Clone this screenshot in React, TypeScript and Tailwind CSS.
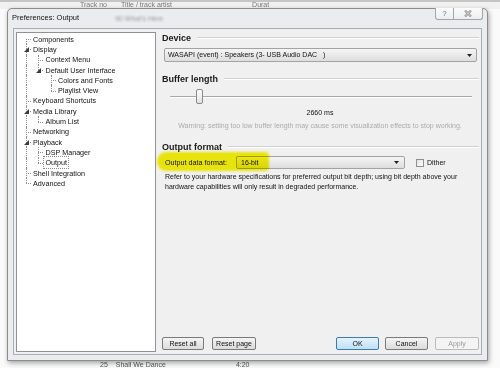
import React from "react";

type Cell = "F" | "T" | "L" | "I" | " ";

const rows: { label: string; cells: Cell[]; exp?: boolean; sel?: boolean }[] = [
  { label: "Components", cells: ["F"] },
  { label: "Display", cells: ["T"], exp: true },
  { label: "Context Menu", cells: ["I", "T"] },
  { label: "Default User Interface", cells: ["I", "L"], exp: true },
  { label: "Colors and Fonts", cells: ["I", " ", "T"] },
  { label: "Playlist View", cells: ["I", " ", "L"] },
  { label: "Keyboard Shortcuts", cells: ["T"] },
  { label: "Media Library", cells: ["T"], exp: true },
  { label: "Album List", cells: ["I", "L"] },
  { label: "Networking", cells: ["T"] },
  { label: "Playback", cells: ["T"], exp: true },
  { label: "DSP Manager", cells: ["I", "T"] },
  { label: "Output", cells: ["I", "L"], sel: true },
  { label: "Shell Integration", cells: ["T"] },
  { label: "Advanced", cells: ["L"] },
];

function Guide({ c, first, exp }: { c: Cell; first: boolean; exp: boolean }) {
  return (
    <div className={first ? "relative h-full w-[15px] shrink-0" : "relative h-full w-[12.5px] shrink-0"}>
      {c !== " " && (
        <div
          className={
            (first ? "left-[9px] " : "left-[6px] ") +
            (c === "F"
              ? "absolute top-1/2 bottom-0 border-l border-dotted border-[#8f8f8f]"
              : c === "L"
              ? "absolute top-0 h-1/2 border-l border-dotted border-[#8f8f8f]"
              : "absolute top-0 bottom-0 border-l border-dotted border-[#8f8f8f]")
          }
        />
      )}
      {(c === "F" || c === "T" || c === "L") && (
        <div
          className={
            (first ? "left-[9px] " : "left-[6px] ") +
            "absolute top-1/2 w-[5px] border-t border-dotted border-[#8f8f8f]"
          }
        />
      )}
      {exp && (
        <svg
          className={(first ? "left-[7px] " : "left-[4px] ") + "absolute top-[3px]"}
          width="5"
          height="5"
          viewBox="0 0 5 5"
        >
          <polygon points="5,0 5,5 0,5" fill="#3a3a3a" />
        </svg>
      )}
    </div>
  );
}

function Heading({ text }: { text: string }) {
  return (
    <div className="flex h-[12px] items-center pl-[2px] pr-[1px]">
      <span className="whitespace-nowrap text-[9px] font-bold leading-[12px] text-[#1a1a1a]">{text}</span>
      <div className="ml-[6px] h-[2px] flex-1 border-t border-b border-t-[#d0d0d0] border-b-white" />
    </div>
  );
}

function Arrow() {
  return (
    <svg width="5" height="3" viewBox="0 0 5 3" className="shrink-0">
      <polygon points="0,0 5,0 2.5,3" fill="#202020" />
    </svg>
  );
}

function Btn({ label, w, kind }: { label: string; w: string; kind?: "ok" | "dis" }) {
  const base = "flex h-[13px] items-center justify-center rounded-[2px] border text-[7px] leading-[10px] ";
  const cls =
    kind === "ok"
      ? "border-[#3d7bad] bg-gradient-to-b from-[#e5f3fc] to-[#bfe0f6] text-[#111]"
      : kind === "dis"
      ? "border-[#b8bcbf] bg-[#f4f4f4] text-[#9a9a9a]"
      : "border-[#7a7a7a] bg-gradient-to-b from-[#f4f4f4] to-[#dcdcdc] text-[#111]";
  return <div className={base + cls + " " + w}>{label}</div>;
}

export default function App() {
  return (
    <div className="relative h-[368px] w-[500px] overflow-hidden bg-[#fafafa] font-['Liberation_Sans',Arial,sans-serif]">
      {/* background window */}
      <div className="flex h-full flex-col">
        <div className="h-[2px] bg-[#c4c4c4]" />
        <div className="flex h-[7px] items-start overflow-hidden bg-[#f1f1f1] text-[7px] leading-[5px] text-[#7a7a7a] blur-[0.5px]">
          <span className="ml-[80px]">Track no</span>
          <span className="ml-[14px]">Title / track artist</span>
          <span className="ml-[80px]">Durat</span>
        </div>
        <div className="flex-1" />
        <div className="flex h-[9px] items-end text-[7px] leading-[7px] text-[#555] blur-[0.5px]">
          <span className="ml-[100px]">25</span>
          <span className="ml-[8px]">Shall We Dance</span>
          <span className="ml-[70px]">4:20</span>
        </div>
      </div>

      {/* dialog window */}
      <div className="absolute left-[7px] top-[8px] flex h-[353px] w-[481px] flex-col rounded-t-[5px] border border-[#8c8c8c] bg-[#eaecef] shadow-[1px_2px_5px_rgba(0,0,0,0.35)]">
        {/* title bar */}
        <div className="flex h-[19px] items-start">
          <span className="ml-[4px] mt-[4px] whitespace-nowrap text-[7.5px] leading-[10px] text-[#111]">
            Preferences: Output
          </span>
          <span className="ml-[36px] mt-[6px] whitespace-nowrap text-[7px] leading-[8px] text-[#9a9a9a] blur-[1px]">
            90 What's Here
          </span>
          <div className="flex-1" />
          <div className="-mt-[1px] mr-[4px] flex h-[12px] overflow-hidden rounded-b-[3px] border border-t-0 border-[#a0a6ac] bg-gradient-to-b from-[#fbfbfb] to-[#eceef0]">
            <div className="flex w-[18px] items-center justify-center border-r border-[#a0a6ac] text-[8px] leading-[8px] text-[#707070]">
              ?
            </div>
            <div className="flex w-[28px] items-center justify-center">
              <svg width="8" height="7" viewBox="0 0 8 7">
                <path d="M1 0.5 L7 6.5 M7 0.5 L1 6.5" stroke="#8a8a8a" strokeWidth="2.2" />
                <path d="M1 0.5 L7 6.5 M7 0.5 L1 6.5" stroke="#f4f4f4" strokeWidth="0.8" />
              </svg>
            </div>
          </div>
        </div>

        {/* client area */}
        <div className="mx-[5px] mb-[5px] flex flex-1 border border-[#a9adb2] bg-[#f0f0f0] pb-[2px] pl-[2px] pr-[1px] pt-[3px]">
          {/* tree */}
          <div className="w-[140px] shrink-0 border border-[#8e9298] bg-white pt-[1px]">
            {rows.map((r) => (
              <div key={r.label} className="flex h-[10.3px] items-center">
                {r.cells.map((c, i) => (
                  <Guide key={i} c={c} first={i === 0} exp={!!r.exp && i === r.cells.length - 1} />
                ))}
                <span
                  className={
                    r.sel
                      ? "whitespace-nowrap pl-[1px] text-[7.2px] leading-[9px] text-[#111] outline-1 outline-dotted outline-[#8a8a8a] outline-offset-[1px]"
                      : "whitespace-nowrap pl-[1px] text-[7.2px] leading-[9px] text-[#111]"
                  }
                >
                  {r.label}
                </span>
              </div>
            ))}
          </div>

          {/* right panel */}
          <div className="ml-[4px] flex flex-1 flex-col">
            <Heading text="Device" />
            <div className="ml-[4px] mr-[3px] mt-[4px] flex h-[14px] items-center rounded-[2px] border border-[#a3a3a3] bg-gradient-to-b from-[#f5f5f5] to-[#dedede] pl-[3px] pr-[4px]">
              <span className="flex-1 whitespace-pre text-[7px] leading-[10px] text-[#111]">
                WASAPI (event) : Speakers (3- USB Audio DAC   )
              </span>
              <Arrow />
            </div>

            <div className="mt-[11px]">
              <Heading text="Buffer length" />
            </div>
            <div className="relative mt-[4px] flex h-[15px] items-center pl-[10px] pr-[8px]">
              <div className="h-[2px] flex-1 border-t border-b border-t-[#a8a8a8] border-b-white bg-[#d8d8d8]" />
              <div className="absolute left-[36px] top-0 h-[15px] w-[7px] rounded-[2px] border border-[#8a8a8a] bg-gradient-to-b from-[#fdfdfd] to-[#e2e2e2]" />
            </div>
            <div className="mt-[4px] h-[10px] text-center text-[7px] leading-[10px] text-[#111]">2660 ms</div>
            <div className="mt-[3px] h-[10px] whitespace-nowrap text-center text-[7px] leading-[10px] text-[#ababab]">
              Warning: setting too low buffer length may cause some visualization effects to stop working.
            </div>

            <div className="mt-[10px]">
              <Heading text="Output format" />
            </div>
            <div className="relative mt-[3px] flex h-[13px] items-center">
              <span className="ml-[5px] w-[71px] shrink-0 whitespace-nowrap text-[7.2px] leading-[10px] text-[#111]">
                Output data format:
              </span>
              <div className="flex h-[13px] w-[169px] shrink-0 items-center rounded-[2px] border border-[#a3a3a3] bg-gradient-to-b from-[#f5f5f5] to-[#dedede] pl-[4px] pr-[5px]">
                <span className="flex-1 text-[7px] leading-[10px] text-[#111]">16-bit</span>
                <Arrow />
              </div>
              <div className="ml-[11px] h-[8px] w-[8px] shrink-0 border border-[#8e8f8f] bg-gradient-to-br from-[#e4e4e4] to-[#fbfbfb]" />
              <span className="ml-[3px] text-[7px] leading-[10px] text-[#111]">Dither</span>
              <div className="pointer-events-none absolute -left-[3px] -top-[4px] h-[19px] w-[112px] rounded-l-[9px] rounded-r-[4px] bg-[#f7f200] opacity-95 mix-blend-multiply blur-[1px]" />
            </div>
            <div className="ml-[5px] mt-[3px] whitespace-nowrap text-[7px] leading-[10px] text-[#111]">
              Refer to your hardware specifications for preferred output bit depth; using bit depth above your
              <br />
              hardware capabilities will only result in degraded performance.
            </div>

            <div className="flex-1" />

            <div className="mb-[2px] flex h-[13px] items-center">
              <div className="ml-[2px]">
                <Btn label="Reset all" w="w-[42px]" />
              </div>
              <div className="ml-[8px]">
                <Btn label="Reset page" w="w-[44px]" />
              </div>
              <div className="flex-1" />
              <Btn label="OK" w="w-[43px]" kind="ok" />
              <div className="ml-[6px]">
                <Btn label="Cancel" w="w-[43px]" />
              </div>
              <div className="ml-[7px] mr-[1px]">
                <Btn label="Apply" w="w-[44px]" kind="dis" />
              </div>
            </div>
          </div>
        </div>
      </div>
    </div>
  );
}
